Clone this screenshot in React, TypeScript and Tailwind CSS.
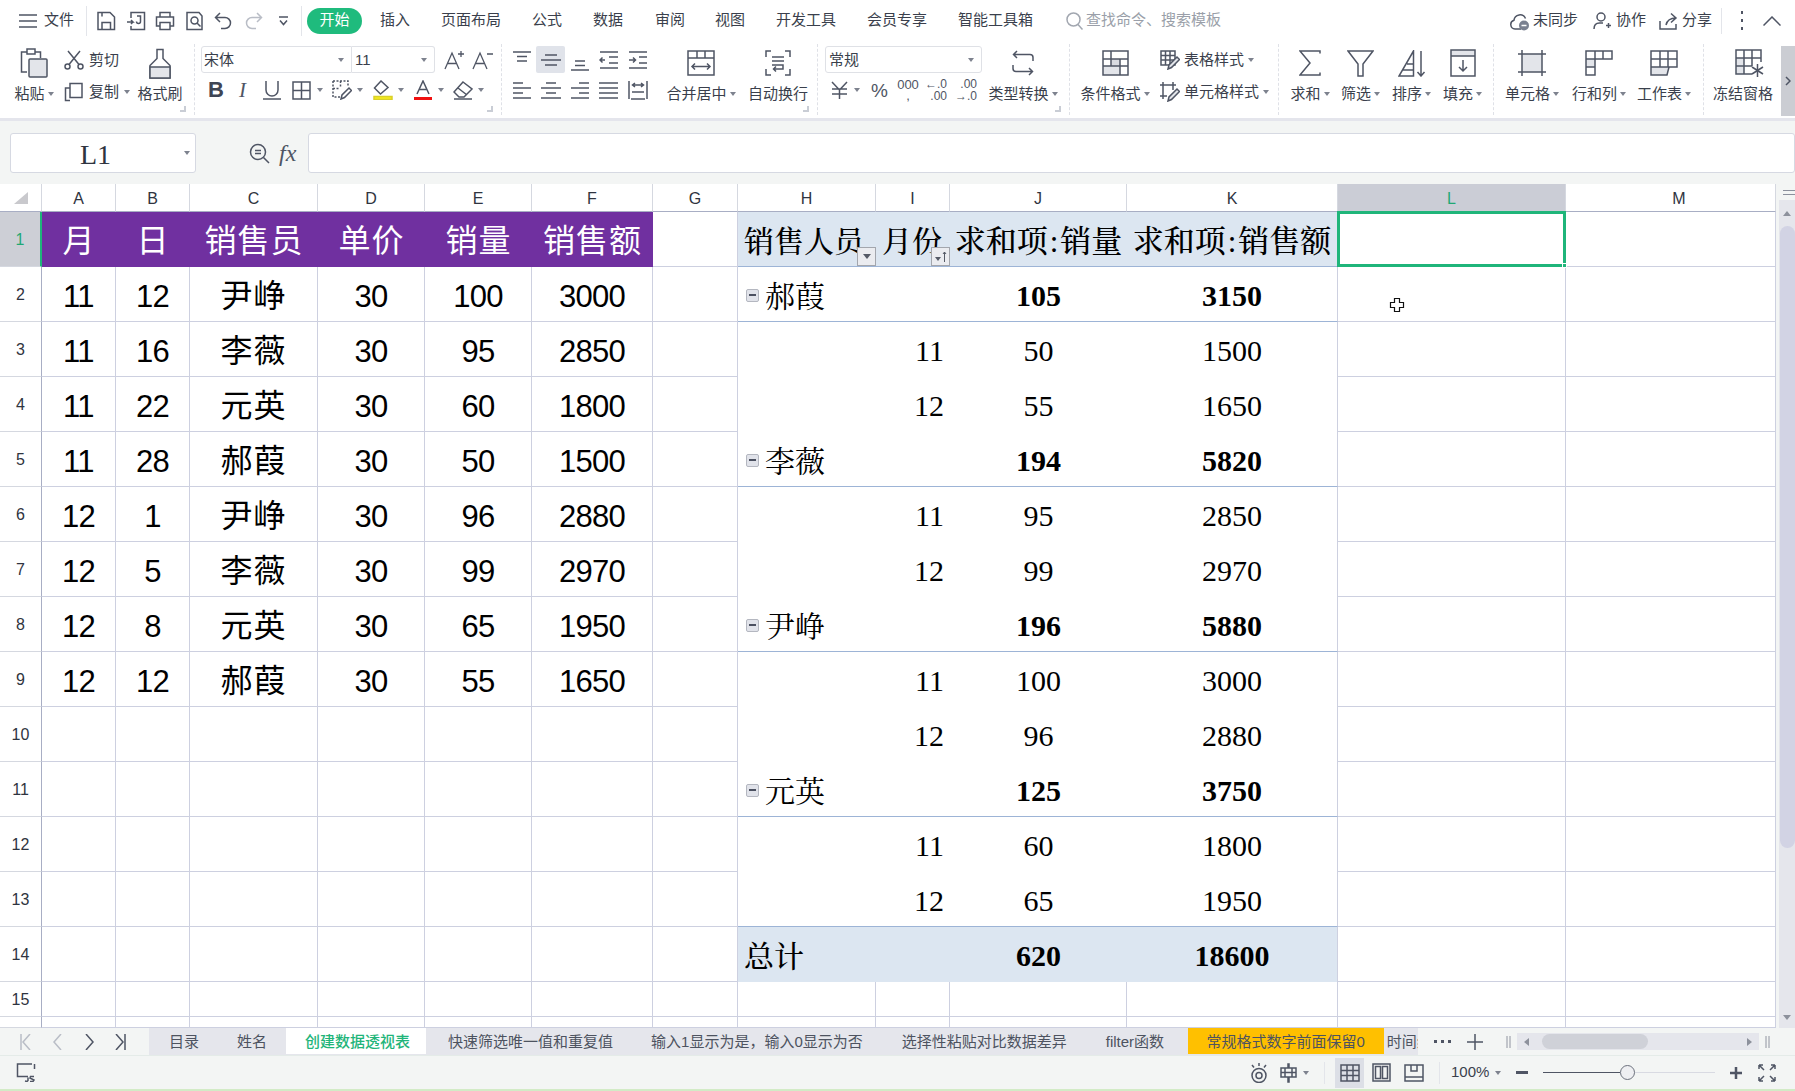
import React from "react";

const S = "#4f5564";
const L = "#b9bdc6";

function Ico({ w, h, children, stroke = S, sw = 1.5, className }: { w: number; h: number; children: React.ReactNode; stroke?: string; sw?: number; className?: string }) {
  return (
    <svg width={w} height={h} viewBox={`0 0 ${w} ${h}`} fill="none" stroke={stroke} strokeWidth={sw} className={"shrink-0 " + (className || "")}>
      {children}
    </svg>
  );
}

function Tri() {
  return <span className="inline-block w-0 h-0 border-x-[3px] border-x-transparent border-t-[4px] border-t-[#7d828e] shrink-0" />;
}

function Big({ icon, label, arrow, cls }: { icon: React.ReactNode; label: string; arrow?: boolean; cls: string }) {
  return (
    <div className={"flex flex-col items-center pt-[2px] shrink-0 " + cls}>
      <div className="h-[34px] flex items-center justify-center">{icon}</div>
      <div className="h-[20px] mt-[4px] flex items-center gap-[3px] text-[15px] leading-[20px] whitespace-nowrap">
        <span>{label}</span>
        {arrow && <Tri />}
      </div>
    </div>
  );
}

function Group({ cls, corner, sep = true, children }: { cls: string; corner?: boolean; sep?: boolean; children: React.ReactNode }) {
  return (
    <div className={"relative mt-[4px] h-[71px] flex items-start shrink-0 " + (sep ? "border-r border-dashed border-[#dfe1e7] " : "") + cls}>
      {children}
      {corner && <span className="absolute right-[8px] bottom-[3px] w-[6px] h-[6px] border-r-2 border-b-2 border-[#c9cdd5]" />}
    </div>
  );
}

const cols = ["A", "B", "C", "D", "E", "F", "G", "H", "I", "J", "K", "L", "M"];

const left: (string | number)[][] = [
  [11, 12, "尹峥", 30, 100, 3000],
  [11, 16, "李薇", 30, 95, 2850],
  [11, 22, "元英", 30, 60, 1800],
  [11, 28, "郝葭", 30, 50, 1500],
  [12, 1, "尹峥", 30, 96, 2880],
  [12, 5, "李薇", 30, 99, 2970],
  [12, 8, "元英", 30, 65, 1950],
  [12, 12, "郝葭", 30, 55, 1650],
];

type P = { kind: "g" | "s" | "t"; a: string; b: string; c: string };
const pivot: P[] = [
  { kind: "g", a: "郝葭", b: "105", c: "3150" },
  { kind: "s", a: "11", b: "50", c: "1500" },
  { kind: "s", a: "12", b: "55", c: "1650" },
  { kind: "g", a: "李薇", b: "194", c: "5820" },
  { kind: "s", a: "11", b: "95", c: "2850" },
  { kind: "s", a: "12", b: "99", c: "2970" },
  { kind: "g", a: "尹峥", b: "196", c: "5880" },
  { kind: "s", a: "11", b: "100", c: "3000" },
  { kind: "s", a: "12", b: "96", c: "2880" },
  { kind: "g", a: "元英", b: "125", c: "3750" },
  { kind: "s", a: "11", b: "60", c: "1800" },
  { kind: "s", a: "12", b: "65", c: "1950" },
  { kind: "t", a: "总计", b: "620", c: "18600" },
];

const SERIF = "font-['Liberation_Serif','Noto_Serif_CJK_SC','Noto_Sans_CJK_SC',serif]";
const line = "border-r border-b border-[#cdd0e0]";

function FilterBtn({ cls, sort }: { cls: string; sort?: boolean }) {
  return (
    <span className={"absolute w-[19px] h-[19px] bg-[#ebecf0] border border-[#a3a6ad] flex items-center justify-center gap-[1px] " + cls}>
      <span className={sort ? "w-0 h-0 border-x-[3px] border-x-transparent border-t-[4px] border-t-[#555a66] mt-[5px]" : "w-0 h-0 border-x-[4px] border-x-transparent border-t-[5px] border-t-[#555a66]"} />
      {sort && (
        <svg width="5" height="11" viewBox="0 0 5 11" fill="none" stroke="#555a66" strokeWidth="1"><path d="M2.5 11V1M1 3l1.5-2L4 3" /></svg>
      )}
    </span>
  );
}

function Sheet() {
  const cells: React.ReactNode[] = [];
  // header row
  cells.push(
    <div key="corner" className="border-r border-b border-[#d5d8e0] border-b-[#a8aec4] flex items-end justify-center pb-[7px]">
      <svg width="14" height="12" viewBox="0 0 14 12"><path d="M14 0V12H0Z" fill="#c9c9cd" /></svg>
    </div>
  );
  cols.forEach((c) => {
    cells.push(
      <div
        key={c}
        className={
          "border-r border-b border-r-[#d5d8e0] border-b-[#a8aec4] flex items-center justify-center pt-[3px] text-[16px] leading-none " +
          (c === "L" ? "bg-[#cbcdd6] text-[#1fa874] " : "text-[#2f3440] ") +
          (c === "M" ? "pl-[17px]" : "")
        }
      >
        {c}
      </div>
    );
  });

  for (let r = 1; r <= 16; r++) {
    cells.push(
      <div
        key={"rh" + r}
        className={
          "border-b border-r border-b-[#d5d8e0] flex items-center justify-center pt-[2px] text-[16px] leading-none " +
          (r === 1 ? "bg-[#cdcfd6] text-[#1fa874] border-r-2 border-r-[#1fb57a]" : "border-r-[#a8aec4] text-[#2f3440]")
        }
      >
        {r === 16 ? "" : r}
      </div>
    );
    cols.forEach((c, ci) => {
      const key = c + r;
      let cls = line;
      let content: React.ReactNode = null;
      if (ci < 6) {
        if (r === 1) {
          cls = "bg-[#7030a0] text-white border-b border-[#7030a0]";
          content = ["月", "日", "销售员", "单价", "销量", "销售额"][ci];
        } else if (r <= 9) {
          content = left[r - 2][ci];
        }
        const isText = typeof content === "string";
        cells.push(
          <div key={key} className={"flex items-center justify-center whitespace-nowrap leading-none font-['Liberation_Sans','Noto_Sans_CJK_SC',sans-serif] " + (isText ? "pt-[3px] text-[32px] tracking-[1px] " : "pt-[4px] text-[31px] tracking-[-0.7px] ") + (r === 1 ? "" : "text-black ") + cls}>
            {content}
          </div>
        );
        return;
      }
      if (ci >= 7 && ci <= 10 && r <= 14) {
        const base = "relative flex items-center pt-[3px] text-[30px] leading-none text-black whitespace-nowrap " + SERIF + " ";
        if (r === 1) {
          const head: React.ReactNode[] = [
            "销售人员",
            "月份",
            <>求和项<span className="mx-[2px]">:</span>销量</>,
            <>求和项<span className="mx-[2px]">:</span>销售额</>,
          ];
          cells.push(
            <div key={key} className={base + "!pt-[5px] bg-[#dce6f1] border-b border-[#9db4d6] font-medium overflow-visible " + (ci === 7 || ci === 8 ? "pl-[6px]" : "justify-center text-[31px]") + (ci === 10 ? " border-r border-r-[#dce6f1]" : "")}>
              {head[ci - 7]}
              {ci === 7 && <FilterBtn cls="right-0 bottom-0 z-10" />}
              {ci === 8 && <FilterBtn cls="right-0 bottom-0 z-10" sort />}
            </div>
          );
          return;
        }
        const p = pivot[r - 2];
        const bottom = p.kind === "g" || r === 13 ? "border-b border-[#9db4d6] " : "";
        const right = ci === 10 ? "border-r border-r-[#cdd0e0] " : "";
        const bg = p.kind === "t" ? "bg-[#dce6f1] " : "";
        let inner: React.ReactNode = null;
        let align = "";
        if (ci === 7) {
          if (p.kind === "g") {
            align = "!pt-[5px] pl-[8px]";
            inner = (
              <>
                <span className="w-[13px] h-[13px] mr-[6px] mb-[3px] bg-[#e1e3ea] border border-[#b4b7c0] rounded-[2px] flex items-center justify-center shrink-0">
                  <span className="w-[7px] h-[1.5px] bg-[#4b5060]" />
                </span>
                {p.a}
              </>
            );
          } else if (p.kind === "t") {
            align = "!pt-[5px] pl-[6px]";
            inner = <span className="font-medium">{p.a}</span>;
          }
        } else if (ci === 8) {
          if (p.kind === "s") {
            align = "justify-end pr-[6px]";
            inner = p.a;
          }
        } else {
          align = "justify-center";
          const v = ci === 9 ? p.b : p.c;
          inner = <span className={p.kind === "s" ? "" : "font-bold"}>{v}</span>;
        }
        cells.push(
          <div key={key} className={base + bottom + right + bg + align}>
            {inner}
          </div>
        );
        return;
      }
      if (c === "L" && r === 1) {
        cells.push(
          <div key={key} className="relative border-[3px] border-[#1fb57a] bg-white -ml-[1px] -mt-[1px]">
            <span className="absolute -right-[4px] -bottom-[4px] w-[5px] h-[5px] bg-[#1fb57a] border border-white" />
          </div>
        );
        return;
      }
      cells.push(<div key={key} className={line} />);
    });
  }

  return (
    <div className="relative h-[844px] flex">
      <div className="w-[1776px] h-[844px] overflow-hidden grid grid-cols-[42px_74px_74px_128px_107px_107px_121px_85px_138px_74px_177px_211px_228px_210px] grid-rows-[28px_repeat(14,55px)_35px_11px] bg-white">
        {cells}
      </div>
      <div className="w-[19px] flex flex-col shrink-0">
        <div className="h-[16px] flex flex-col items-center justify-center gap-[3px] pl-[6px]">
          <span className="w-[12px] h-[1px] bg-[#8b909c]" />
          <span className="w-[12px] h-[1px] bg-[#8b909c]" />
        </div>
        <div className="flex-1 ml-[3px] bg-[#e5e6ec] flex flex-col">
          <div className="h-[26px] flex items-center justify-center shrink-0">
            <span className="w-0 h-0 border-x-[4px] border-x-transparent border-b-[5px] border-b-[#8d919c]" />
          </div>
          <div className="h-[622px] ml-[1px] bg-[#d2d3e4] rounded-full shrink-0" />
          <div className="flex-1 flex items-end justify-center pb-[8px]">
            <span className="w-0 h-0 border-x-[4px] border-x-transparent border-t-[5px] border-t-[#8d919c]" />
          </div>
        </div>
      </div>
      <svg className="absolute left-[1389px] top-[113px]" width="16" height="16" viewBox="0 0 16 16" fill="#fff" stroke="#111" strokeWidth="1.2">
        <path d="M5.5 1.5h5v4h4v5h-4v4h-5v-4h-4v-5h4z" />
      </svg>
    </div>
  );
}

export default function App() {
  return (
    <div className="w-[1795px] h-[1091px] overflow-hidden flex flex-col bg-[#f3f5f4] text-[#3a3f4c] font-['Liberation_Sans','Noto_Sans_CJK_SC',sans-serif]">
      {/* top bar */}
      <div className="h-[40px] pt-[1px] bg-white flex items-center text-[15px] shrink-0 whitespace-nowrap">
        <Ico w={18} h={14} className="ml-[19px]"><path d="M0 1h18M0 7h18M0 13h18" /></Ico>
        <span className="ml-[7px] w-[30px]">文件</span>
        <span className="ml-[12px] w-[1px] h-[30px] bg-[#e3e5ea]" />
        <Ico w={20} h={20} className="ml-[9px]"><path d="M2 1.5h12l4.5 4.5v12.5H2zM6 18.5v-7h8.5v7M6 1.5v4" /></Ico>
        <Ico w={20} h={20} className="ml-[10px]"><path d="M5 7V1.5h13.5v17H5V15M1 11h6l-2-2M7 11l-2 2M11 5h3.5v5.5a2 2 0 0 1-4 0" /></Ico>
        <Ico w={20} h={20} className="ml-[9px]"><path d="M5 6V1.5h10V6M5 15H1.5V6h17v9H15M5 11.5h10v7H5z" /></Ico>
        <Ico w={20} h={20} className="ml-[10px]"><path d="M14 1.5H2v17h15V5zM9.5 6a3.5 3.5 0 1 0 0 7 3.5 3.5 0 0 0 0-7zM12 12l3.5 3.5" /></Ico>
        <Ico w={18} h={20} className="ml-[9px]"><path d="M6 2 1.5 6.5 6 11M1.5 6.5H11a5.5 5.5 0 0 1 0 11H7" /></Ico>
        <Ico w={18} h={20} className="ml-[13px]" stroke={L}><path d="M12 2l4.5 4.5L12 11M16.5 6.5H7a5.5 5.5 0 0 0 0 11h4" /></Ico>
        <Ico w={9} h={10} className="ml-[16px]"><path d="M0 1h9M1 4.5l3.5 4 3.5-4" /></Ico>
        <span className="ml-[13px] w-[1px] h-[30px] bg-[#e3e5ea]" />
        <span className="ml-[5px] w-[55px] h-[26px] rounded-full bg-[#1fbb7d] text-white flex items-center justify-center">开始</span>
        <span className="ml-[18px] w-[30px]">插入</span>
        <span className="ml-[31px] w-[60px]">页面布局</span>
        <span className="ml-[31px] w-[30px]">公式</span>
        <span className="ml-[31px] w-[30px]">数据</span>
        <span className="ml-[32px] w-[30px]">审阅</span>
        <span className="ml-[30px] w-[30px]">视图</span>
        <span className="ml-[31px] w-[60px]">开发工具</span>
        <span className="ml-[31px] w-[60px]">会员专享</span>
        <span className="ml-[31px] w-[75px]">智能工具箱</span>
        <Ico w={17} h={18} className="ml-[33px]" stroke="#a2a7b0"><circle cx="7.5" cy="7.5" r="6.5" /><path d="M12 12.5l4.5 5" /></Ico>
        <span className="ml-[3px] w-[135px] text-[#9a9fa9]">查找命令、搜索模板</span>
        <Ico w={20} h={20} className="ml-[288px]"><path d="M12 18H6a4.5 4.5 0 0 1-1-8.8A6 6 0 0 1 16.5 7.5" /><circle cx="15" cy="14.5" r="5" fill="#7a8190" stroke="none" /><path d="M12.5 14.5h5" stroke="#fff" /></Ico>
        <span className="ml-[4px]">未同步</span>
        <Ico w={18} h={18} className="ml-[15px]"><circle cx="8" cy="5" r="4" /><path d="M1 17c0-4 2.5-6 5.5-6h3.5M13 13.5h5M15.5 11v5" /></Ico>
        <span className="ml-[5px]">协作</span>
        <Ico w={19} h={18} className="ml-[13px]"><path d="M1 9v8h16v-5M12 1.5l5 4.5-5 4.5M17 6c-6 0-9 2.5-10 7" /></Ico>
        <span className="ml-[4px]">分享</span>
        <span className="ml-[9px] w-[1px] h-[26px] bg-[#e3e5ea]" />
        <span className="ml-[19px] flex flex-col gap-[5px]">
          <span className="w-[2px] h-[3px] bg-[#4f5564]" />
          <span className="w-[2px] h-[3px] bg-[#4f5564]" />
          <span className="w-[2px] h-[3px] bg-[#4f5564]" />
        </span>
        <Ico w={18} h={10} className="ml-[20px]"><path d="M0.5 9.5 9 1l8.5 8.5" /></Ico>
      </div>

      {/* ribbon */}
      <div className="h-[78px] bg-white flex items-start shrink-0 overflow-hidden">
        <Group cls="w-[195px]" corner>
          <Big
            cls="ml-[14px] w-[40px]"
            arrow
            label="粘贴"
            icon={
              <Ico w={28} h={30}>
                <path d="M7 24H1.5V4h19v6" />
                <rect x="7" y="1" width="8" height="5" fill="#fff" />
                <rect x="9" y="11" width="18" height="18" rx="1" fill="#e3e5ea" />
              </Ico>
            }
          />
          <div className="ml-[10px] w-[64px] flex flex-col pt-[6px] text-[15px] leading-[20px] shrink-0 whitespace-nowrap">
            <div className="h-[20px] flex items-center gap-[5px]">
              <Ico w={20} h={20}><circle cx="3.5" cy="16.5" r="2.5" /><circle cx="16.5" cy="16.5" r="2.5" /><path d="M5 14.5 16 1M15 14.5 4 1" /></Ico>
              <span>剪切</span>
            </div>
            <div className="h-[20px] mt-[12px] flex items-center gap-[5px]">
              <Ico w={20} h={20}><path d="M6 18.5H1.500V6H6" /><rect x="6" y="1.5" width="12" height="14" fill="#fff" /></Ico>
              <span>复制</span>
              <Tri />
            </div>
          </div>
          <Big
            cls="ml-[10px] w-[44px]"
            label="格式刷"
            icon={
              <Ico w={24} h={31}>
                <path d="M9 1.5h6v9l7 7v12.5H2V17.5l7-7z" />
                <path d="M2 19h20v11H2z" fill="#e3e5ea" />
              </Ico>
            }
          />
        </Group>

        <Group cls="w-[307px]" corner>
          <div className="ml-[6px] flex flex-col pt-[2px]">
            <div className="h-[27px] flex items-center">
              <div className="w-[151px] h-[27px] border border-[#dfe1e6] rounded-l-[3px] flex items-center justify-between pl-[2px] pr-[7px] pt-[1px] text-[15px]">
                <span>宋体</span>
                <Tri />
              </div>
              <div className="w-[83px] h-[27px] border border-l-0 border-[#dfe1e6] rounded-r-[3px] flex items-center justify-between pl-[3px] pr-[7px] pt-[1px] text-[15px]">
                <span>11</span>
                <Tri />
              </div>
              <Ico w={20} h={20} className="ml-[9px]" sw={1.3}><path d="M1 19 8 3l7 16M3.5 13.5h9M14 4h6M17 1v6" /></Ico>
              <Ico w={21} h={20} className="ml-[8px]" sw={1.3}><path d="M1 19 8 3l7 16M3.5 13.5h9M15 4h6" /></Ico>
            </div>
            <div className="h-[28px] mt-[3px] flex items-center">
              <span className="ml-[7px] w-[15px] text-[22px] font-bold leading-none text-[#3f4554]">B</span>
              <span className="ml-[16px] w-[10px] text-[21px] leading-none italic font-['Liberation_Serif',serif] text-[#4f5564]">I</span>
              <Ico w={18} h={20} className="ml-[14px]"><path d="M3 1v9a6 6 0 0 0 12 0V1M0 19h18" /></Ico>
              <Ico w={19} h={19} className="ml-[11px]"><path d="M1 1h17v17H1zM9.5 1v17M1 9.5h17" /></Ico>
              <span className="ml-[6px] flex"><Tri /></span>
              <Ico w={20} h={20} className="ml-[9px]"><path d="M1 1h15v6M1 1v16h7M8.5 1v7M1 8.5h7" strokeDasharray="2 1.5" /><path d="M9 19l1-4 7-7 2.5 2.5-7 7z" /></Ico>
              <span className="ml-[5px] flex"><Tri /></span>
              <Ico w={20} h={20} className="ml-[10px]"><path d="M8 1 1.5 8l6 6 7.5-6.5z" /><path d="M1 16.5h18v3H1z" fill="#f5ec1d" stroke="#d9d02a" /></Ico>
              <span className="ml-[5px] flex"><Tri /></span>
              <Ico w={18} h={20} className="ml-[10px]"><path d="M3 14 9 1l6 13M5 9.5h8" /><path d="M0 18.5h18" stroke="#f01010" strokeWidth="3" /></Ico>
              <span className="ml-[6px] flex"><Tri /></span>
              <Ico w={20} h={19} className="ml-[9px]"><path d="M10 1l9 7-8 8H6l-5-5zM5 7l9 7M1 18h18" /></Ico>
              <span className="ml-[5px] flex"><Tri /></span>
            </div>
          </div>
        </Group>

        <Group cls="w-[316px]" corner>
          <div className="ml-[5px] pt-[2px] grid grid-cols-[repeat(5,29px)] grid-rows-[27px_28px] gap-y-[3px] shrink-0">
            <div className="flex items-start justify-center pt-[5px]"><Ico w={18} h={11}><path d="M0 1h18M4 5.5h10M4 10h10" /></Ico></div>
            <div className="flex items-center justify-center bg-[#e0e3ea] rounded-[2px]"><Ico w={20} h={12}><path d="M4 1h12M0 6h20M4 11h12" /></Ico></div>
            <div className="flex items-end justify-center pb-[2px]"><Ico w={18} h={11}><path d="M4 1h10M4 5.5h10M0 10h18" /></Ico></div>
            <div className="flex items-center justify-center"><Ico w={20} h={18}><path d="M1 1h18M10 6h9M10 12h9M1 17h18M6 9H1M3.5 6.5 1 9l2.5 2.5" /></Ico></div>
            <div className="flex items-center justify-center"><Ico w={20} h={18}><path d="M1 1h18M11 6h8M11 12h8M1 17h18M1 9h6M5 6.5 7.5 9 5 11.5" /></Ico></div>
            <div className="flex items-center justify-center"><Ico w={18} h={17}><path d="M0 1h10M0 6h18M0 11h10M0 16h18" /></Ico></div>
            <div className="flex items-center justify-center"><Ico w={20} h={17}><path d="M5 1h10M0 6h20M5 11h10M0 16h20" /></Ico></div>
            <div className="flex items-center justify-center"><Ico w={18} h={17}><path d="M8 1h10M0 6h18M8 11h10M0 16h18" /></Ico></div>
            <div className="flex items-center justify-center"><Ico w={19} h={17}><path d="M0 1h19M0 6h19M0 11h19M0 16h19" /></Ico></div>
            <div className="flex items-center justify-center"><Ico w={20} h={20}><path d="M1 1v18M19 1v18M3 19h14M4 12h12M4.500 5h11M7 3 4.5 5 7 7M13 3l2.5 2-2.5 2" /></Ico></div>
          </div>
          <Big
            cls="ml-[14px] w-[70px]"
            arrow
            label="合并居中"
            icon={
              <Ico w={28} h={26}>
                <path d="M1 1h26v24H1zM1 8h26M10 1v7M18 1v7" />
                <path d="M5 16.5h18M8 13.5l-3 3 3 3M20 13.5l3 3-3 3" />
              </Ico>
            }
          />
          <Big
            cls="ml-[12px] w-[60px]"
            label="自动换行"
            icon={
              <Ico w={28} h={26}>
                <path d="M7 1H2v6M21 1h5v6M2 19v6h5M26 19v6h-5M8 7h12M8 11h12M8 15h11v4h-9M12 16.5 9.5 19l2.5 2.5" />
              </Ico>
            }
          />
        </Group>

        <Group cls="w-[252px]" corner>
          <div className="ml-[7px] w-[157px] flex flex-col pt-[2px] shrink-0">
            <div className="h-[27px] border border-[#dfe1e6] rounded-[3px] flex items-center justify-between pl-[3px] pr-[7px] pt-[1px] text-[15px]">
              <span>常规</span>
              <Tri />
            </div>
            <div className="h-[28px] mt-[3px] flex items-center">
              <Ico w={17} h={18} className="ml-[6px]"><path d="M1 1l7.5 8L16 1M1 8h15M1 13h15M8.5 9v9" /></Ico>
              <span className="ml-[6px] flex"><Tri /></span>
              <span className="ml-[11px] w-[17px] text-[19px] leading-none text-[#4f5564]">%</span>
              <div className="ml-[10px] w-[20px] flex flex-col items-center text-[13px] leading-[11px] text-[#4f5564]">
                <span>000</span>
                <span>,</span>
              </div>
              <div className="ml-[9px] w-[20px] flex flex-col items-end text-[12px] leading-[12px] text-[#4f5564]">
                <span>←.0</span>
                <span>.00</span>
              </div>
              <div className="ml-[10px] w-[20px] flex flex-col items-end text-[12px] leading-[12px] text-[#4f5564]">
                <span>.00</span>
                <span>→.0</span>
              </div>
            </div>
          </div>
          <Big
            cls="ml-[6px] w-[70px]"
            arrow
            label="类型转换"
            icon={
              <Ico w={22} h={26}>
                <path d="M5 1 1.5 4.5 5 8M1.5 4.5H18a3 3 0 0 1 3 3V11M17 18l3.500 3.500L17 25M21 21.500H4a3 3 0 0 1-3-3V15" />
              </Ico>
            }
          />
        </Group>

        <Group cls="w-[209px]">
          <Big
            cls="ml-[10px] w-[70px]"
            arrow
            label="条件格式"
            icon={
              <Ico w={27} h={26}>
                <rect x="9" y="9" width="9" height="7" fill="#d9dbe1" stroke="none" />
                <rect x="1" y="16" width="17" height="9" fill="#e3e5ea" stroke="none" />
                <path d="M1 1h25v24H1zM9 1v15M18 9v16M1 9h25M1 16h25" />
              </Ico>
            }
          />
          <div className="ml-[10px] flex flex-col pt-[6px] text-[15px] leading-[20px]">
            <div className="h-[20px] flex items-center gap-[4px]">
              <Ico w={20} h={20}><path d="M1 1h14v14H1zM5.500 1v14M10 1v14M1 5.500h14M1 10h14" /><path d="M8 19l1-4 8-8 2.500 2.500-8 8z" fill="#e3e5ea" /></Ico>
              <span>表格样式</span>
              <Tri />
            </div>
            <div className="h-[20px] mt-[12px] flex items-center gap-[4px]">
              <Ico w={20} h={20}><path d="M0 3h16M3 0v17M13 0v8M0 14h7" /><path d="M8 19l1-4 8-8 2.500 2.500-8 8z" fill="#e3e5ea" /></Ico>
              <span>单元格样式</span>
              <Tri />
            </div>
          </div>
        </Group>

        <Group cls="w-[215px]">
          <Big cls="ml-[12px] w-[38px]" arrow label="求和" icon={<Ico w={22} h={26}><path d="M21 3.500V1H1l10 12L1 25h20v-2.500" /></Ico>} />
          <Big cls="ml-[12px] w-[39px]" arrow label="筛选" icon={<Ico w={27} h={27}><path d="M1 1h25L16 14v12h-5V14z" /></Ico>} />
          <Big cls="ml-[12px] w-[39px]" arrow label="排序" icon={<Ico w={28} h={27}><path d="M15.500 1 1 26h14.500zM9 14h6.500M4 20h11.500M23 1v25M19.500 22 23 26l3.500-4" /></Ico>} />
          <Big cls="ml-[12px] w-[39px]" arrow label="填充" icon={<Ico w={26} h={28}><rect x="1" y="1" width="24" height="6" fill="#e3e5ea" stroke="none" /><path d="M1 1h24v26H1zM1 7h24M13 11v11M9 18l4 4 4-4" /></Ico>} />
        </Group>

        <Group cls="w-[210px]">
          <Big cls="ml-[11px] w-[54px]" arrow label="单元格" icon={<Ico w={28} h={26}><rect x="4" y="4" width="20" height="18" fill="#e3e5ea" stroke="none" /><path d="M0 4h28M0 22h28M4 0v26M24 0v26" /></Ico>} />
          <Big cls="ml-[12px] w-[56px]" arrow label="行和列" icon={<Ico w={28} h={26}><rect x="1" y="9" width="9" height="8" fill="#e3e5ea" stroke="none" /><path d="M1 1h26v8H10v16H1zM1 9h9M1 17h9M10 1v8M18 1v8" /></Ico>} />
          <Big cls="ml-[10px] w-[54px]" arrow label="工作表" icon={<Ico w={28} h={26}><rect x="1" y="17" width="17" height="8" fill="#e3e5ea" stroke="none" /><path d="M1 1h26v16h-8l-2 8H1zM1 9h26M1 17h18M10 1v16M18 1v16" /></Ico>} />
        </Group>

        <Group cls="w-[77px]" sep={false}>
          <Big
            cls="ml-[9px] w-[60px]"
            label="冻结窗格"
            icon={
              <Ico w={29} h={28} className="ml-[12px]">
                <rect x="1" y="9" width="8" height="16" fill="#e3e5ea" stroke="none" />
                <path d="M17 25H1V1h25v12M9 1v24M17 1v16M1 9h25M1 17h16M22.500 15v13M17 18l11 7M28 18l-11 7" />
              </Ico>
            }
          />
        </Group>
        <div className="w-[14px] h-[70px] mt-[6px] bg-[#cbcdd3] flex items-center justify-center">
          <Ico w={6} h={10} stroke="#4f5564"><path d="M1 1l4 4-4 4" /></Ico>
        </div>
      </div>

      <div className="h-[3px] bg-[#e4e5ec] shrink-0" />

      {/* formula bar */}
      <div className="h-[63px] flex items-start pt-[12px] shrink-0">
        <div className="ml-[10px] w-[186px] h-[40px] bg-white border border-[#d6d9e2] rounded-[3px] flex items-center">
          <span className={"ml-[69px] pt-[3px] text-[28px] leading-none text-[#2f3440] " + SERIF}>L1</span>
          <span className="ml-auto mr-[5px] flex"><Tri /></span>
        </div>
        <Ico w={21} h={21} className="ml-[53px] mt-[10px]"><circle cx="9" cy="9" r="7.500" /><path d="M14.500 14.500 20 20M6 7.500h6M6 10.500h6" /></Ico>
        <span className={"ml-[9px] mt-[6px] w-[20px] text-[24px] italic leading-[28px] text-[#4f5564] " + SERIF}>fx</span>
        <div className="ml-[9px] flex-1 h-[40px] bg-white border border-[#d6d9e2] rounded-[3px]" />
      </div>

      <Sheet />

      {/* sheet tabs */}
      <div className="h-[27px] flex items-start text-[15px] whitespace-nowrap shrink-0">
        <div className="w-[149px] h-[27px] flex items-center shrink-0">
          <Ico w={11} h={16} className="ml-[20px]" stroke={L}><path d="M1 0v16M10 0 3 8l7 8" /></Ico>
          <Ico w={9} h={16} className="ml-[22px]" stroke={L}><path d="M8 0 1 8l7 8" /></Ico>
          <Ico w={9} h={16} className="ml-[23px]"><path d="M1 0l7 8-7 8" /></Ico>
          <Ico w={11} h={16} className="ml-[21px]"><path d="M1 0l7 8-7 8M10 0v16" /></Ico>
        </div>
        <div className="w-[1269px] h-[27px] bg-[#e5e6ec] flex items-start overflow-hidden shrink-0 text-[#4d5360] leading-[27px]">
          <span className="ml-[1px] px-[19px]">目录</span>
          <span className="px-[19px]">姓名</span>
          <span className="pl-[19px] pr-[16px] h-[26px] bg-white text-[#1fb57a] font-medium">创建数据透视表</span>
          <span className="pl-[22px] pr-[19px]">快速筛选唯一值和重复值</span>
          <span className="px-[19px]">输入1显示为是，输入0显示为否</span>
          <span className="px-[20px]">选择性粘贴对比数据差异</span>
          <span className="w-[101px] pl-[19px] shrink-0">filter函数</span>
          <span className="w-[196px] h-[26px] bg-[#ffc000] text-center shrink-0">常规格式数字前面保留0</span>
          <span className="pl-[3px]">时间线</span>
        </div>
        <div className="h-[27px] flex items-center flex-1">
          <span className="ml-[16px] flex gap-[4px]">
            <span className="w-[3px] h-[3px] bg-[#4f5564]" />
            <span className="w-[3px] h-[3px] bg-[#4f5564]" />
            <span className="w-[3px] h-[3px] bg-[#4f5564]" />
          </span>
          <Ico w={16} h={16} className="ml-[16px]"><path d="M0 8h16M8 0v16" /></Ico>
          <Ico w={5} h={12} className="ml-[23px]" stroke="#9094a0" sw={1}><path d="M1 0v12M4 0v12" /></Ico>
          <div className="ml-[6px] w-[242px] h-[17px] bg-[#e5e6ec] flex items-center">
            <span className="ml-[7px] w-0 h-0 border-y-[4px] border-y-transparent border-r-[5px] border-r-[#8d919c]" />
            <span className="ml-[13px] w-[106px] h-[15px] bg-[#cfd1d8] rounded-full" />
            <span className="ml-auto mr-[7px] w-0 h-0 border-y-[4px] border-y-transparent border-l-[5px] border-l-[#8d919c]" />
          </div>
          <Ico w={5} h={12} className="ml-[6px]" stroke="#9094a0" sw={1}><path d="M1 0v12M4 0v12" /></Ico>
        </div>
      </div>

      {/* status bar */}
      <div className="h-[34px] flex items-center shrink-0 border-t border-[#e4ebe8] whitespace-nowrap">
        <Ico w={20} h={19} className="ml-[16px]"><path d="M16 1H1.500v12.500H12M18.500 1v5M9 18l2 .5 1-1v-3M14 18.500h3l1-1.500-4-2 .5-1.500h3.500" sw-none="" /></Ico>
        <Ico w={20} h={20} className="ml-[1213px]"><circle cx="10" cy="12.500" r="7" /><circle cx="10" cy="12.500" r="3" /><path d="M3 2l2 2.500M10 0v3M17 2l-2 2.500" /></Ico>
        <Ico w={21} h={20} className="ml-[9px]"><path d="M7 5h3V1h1v4h7v9h-7v5h-1v-5H3V5zM3 9.500h15M7 5h7v9H7z" /></Ico>
        <span className="ml-[4px] flex"><Tri /></span>
        <span className="ml-[15px] w-[1px] h-[22px] bg-[#e3e5ea]" />
        <div className="ml-[10px] w-[29px] h-[30px] bg-[#dcdfe6] flex items-center justify-center">
          <Ico w={20} h={18}><path d="M1 1h18v16H1zM1 6.500h18M1 11.500h18M7 1v16M13 1v16" /></Ico>
        </div>
        <Ico w={19} h={19} className="ml-[8px]"><path d="M1 1h17v17H1zM3.500 3.500h5v12h-5zM10.500 3.500h5v12h-5z" /></Ico>
        <Ico w={20} h={18} className="ml-[13px]"><path d="M1 1h18v16H1zM1 13h18M7 1v6h6V1" /></Ico>
        <span className="ml-[15px] w-[1px] h-[22px] bg-[#e3e5ea]" />
        <span className="ml-[11px] text-[15px]">100%</span>
        <span className="ml-[6px] flex"><Tri /></span>
        <span className="ml-[15px] w-[12px] h-[3px] bg-[#4f5564]" />
        <div className="ml-[15px] w-[172px] h-[1px] bg-[#d8dae2] flex items-center">
          <span className="w-[77px] h-[1px] bg-[#4f5564]" />
          <span className="w-[15px] h-[15px] rounded-full bg-[#eeeff2] border border-[#6c717d] shrink-0" />
        </div>
        <Ico w={12} h={12} className="ml-[15px]" sw={2.5}><path d="M0 6h12M6 0v12" /></Ico>
        <Ico w={18} h={18} className="ml-[16px]"><path d="M1 1h4M1 1v4M1 1l5 5M17 1h-4M17 1v4M17 1l-5 5M1 17h4M1 17v-4M1 17l5-5M17 17h-4M17 17v-4M17 17l-5-5" /></Ico>
      </div>
      <div className="h-[2px] bg-[#d2ebc6] shrink-0" />
    </div>
  );
}
